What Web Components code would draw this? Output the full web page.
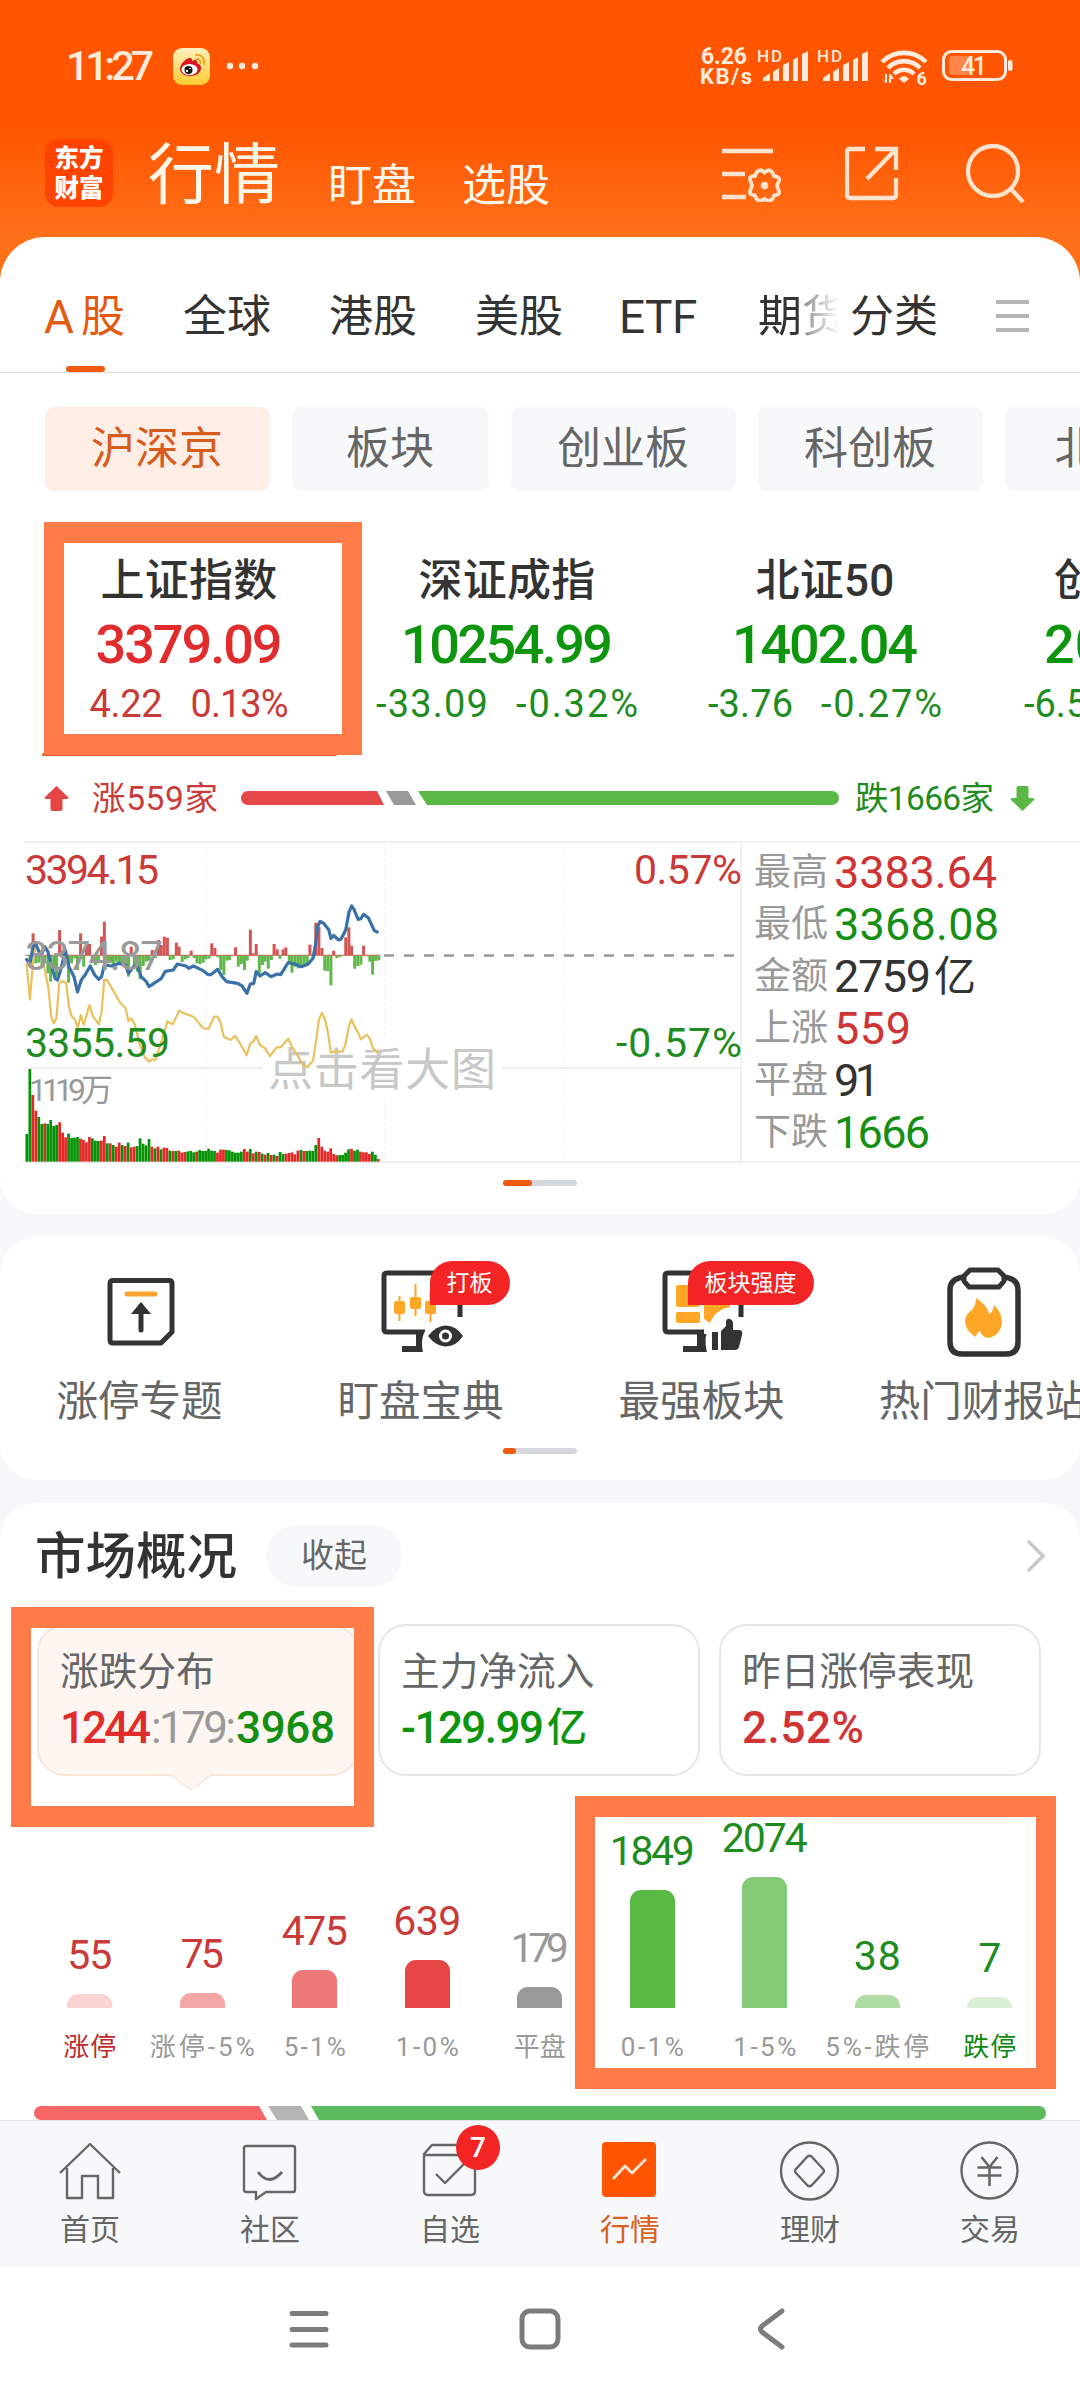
<!DOCTYPE html>
<html lang="zh-CN">
<head>
<meta charset="utf-8">
<title>行情</title>
<style>
    html, body { margin: 0; height: 2400px; overflow: hidden; }
    body {
        width: 1080px;
        font-family: Roboto, "Noto Sans CJK SC", sans-serif;
        color: #333;
        --up: #e02c2c;
        --up-soft: #c93a38;
        --down: #0d960d;
        --down-soft: #1f8c1f;
        --brand: #e35a12;
        --muted: #999;
    }
</style>
</head>
<body>
<market-app></market-app>

<script>
(function() {
    /**
     * Register a custom element from its styles and markup.
     */
    const define = function (name, css, html, setup) {
        const template = document.createElement('template');
        template.innerHTML = `<style>:host { display: block; box-sizing: border-box; } ${css}</style>${html}`;

        customElements.define(name, class extends HTMLElement {
            constructor() {
                super();

                this.attachShadow({mode: 'open'});
                this.shadowRoot.appendChild(template.content.cloneNode(true));
            }

            connectedCallback() {
                if (setup) {
                    setup(this, this.shadowRoot);
                }
            }
        });
    };


    /*
     *     Text tracked to an exact width
     * --------------------------------------
     */
    define('fit-text', `
        :host { display: inline-block; white-space: nowrap; }
        span { display: inline-block; }
    `, `<span><slot></slot></span>`, (el, root) => {
        const span = root.querySelector('span');
        const length = el.textContent.length;

        el.style.fontSize = el.getAttribute('size') + 'px';

        const natural = span.getBoundingClientRect().width;
        const target = Number(el.getAttribute('width'));

        if (target && length > 1) {
            const spacing = (target - natural) / (length - 1);
            span.style.letterSpacing = spacing + 'px';
            span.style.marginRight = -spacing + 'px';
        }
    });


    /*
     *     Status bar
     * ------------------
     */
    define('status-bar', `
        :host { height: 132px; display: flex; align-items: center; padding: 0 64px 0 66px; color: #ffeadb; }
        .time { font-weight: 500; }
        .weibo { margin-left: 19px; }
        .dots { margin-left: 16px; }
        .right { margin-left: auto; }
        svg { display: block; }
    `, `
        <fit-text class="time" size="41" width="88">11:27</fit-text>
        <svg class="weibo" width="37" height="37" viewBox="0 0 37 37">
            <defs><linearGradient id="g" x2="0" y2="1"><stop stop-color="#fff0c0"/><stop offset="1" stop-color="#ffcb2e"/></linearGradient></defs>
            <rect width="37" height="37" rx="9" fill="url(#g)"/>
            <path d="M7 21c0-5 6-11 10-11 2 0 2 1 2 3 3-2 6-1 5 2 3 1 4 3 4 5 0 5-5 8-11 8S7 25 7 21z" fill="#d9151f"/>
            <ellipse cx="16.500" cy="21.500" rx="8" ry="5.500" fill="#fff"/>
            <circle cx="15.500" cy="22" r="4" fill="#111"/>
            <circle cx="14" cy="23" r="1.200" fill="#fff"/><circle cx="17" cy="20.500" r=".8" fill="#fff"/>
            <path d="M23 7c5-1 9 3 8 9M23.500 11c2.500-.4 4.300 1.500 4 4" fill="none" stroke="#eaa61c" stroke-width="1.900" stroke-linecap="round"/>
        </svg>
        <svg class="dots" width="33" height="8" fill="#ffeadb"><circle cx="4" cy="4" r="3.200"/><circle cx="16" cy="4" r="3.200"/><circle cx="29" cy="4" r="3.200"/></svg>
        <svg class="right" width="317" height="44" viewBox="699 44 317 44" fill="#ffeadb" font-family="Roboto">
            <text x="701" y="64" font-size="23" font-weight="700" textLength="46">6.26</text>
            <text x="700" y="84" font-size="22" font-weight="700" textLength="52">KB/s</text>
            <g id="sig">
                <text x="757" y="62" font-size="17" font-weight="500" textLength="25">HD</text>
                <path d="M763 81v-3l7-5v8zM773 80v-8l6-4v13h-5zM783 81v-16l6-3v19zM793 81v-21l5-3v24zM802 81v-27l6-3v30z"/>
            </g>
            <use href="#sig" x="60"/>
            <g fill="none" stroke="#ffeadb" stroke-width="4.600">
                <path d="M882 62a31 31 0 0 1 44 0"/>
                <path d="M888 68a22 22 0 0 1 32 0"/>
                <path d="M894 74a14 14 0 0 1 20 0"/>
            </g>
            <path d="M899 79q5-6 10 0l-5 4z"/>
            <path d="M881 77l4 5v-8h2v9h-2zM889 83v-9h2l3 5h-3v4z"/>
            <text x="916.500" y="84.500" font-size="18" font-weight="700">6</text>
            <rect x="949" y="56" width="20" height="19" rx="3" fill="#ff844a"/>
            <rect x="943.500" y="51.500" width="62" height="28" rx="8" fill="none" stroke="#ffeadb" stroke-width="3"/>
            <rect x="1008" y="60" width="4.500" height="11" rx="2"/>
            <text x="961" y="75" font-size="25" font-weight="500" textLength="26">41</text>
        </svg>
    `);


    /*
     *     App header
     * ------------------
     */
    define('app-header', `
        :host { height: 82px; margin-bottom: 23px; display: flex; align-items: center; padding: 0 54px 0 45px; color: #fff8ea; }
        .logo {
            width: 68px; height: 68px; border-radius: 14px; background: #ff4300; color: #fff;
            font: 900 24.500px/30px "Noto Sans CJK SC", sans-serif; text-align: center; padding: 3px 0 5px; box-sizing: border-box;
        }
        .title { margin: 5px 0 0 35px; font-size: 66px; line-height: 82px; }
        .link { margin: 26px 0 0 48px; font-size: 44px; line-height: 60px; }
        .link + .link { margin-left: 46px; }
        .icons { margin-left: auto; display: flex; align-items: center; }
        svg { display: block; fill: none; stroke: #ffe3cd; stroke-width: 4.300; }
    `, `
        <div class="logo">东方<br>财富</div>
        <div class="title">行情</div>
        <div class="link">盯盘</div>
        <div class="link">选股</div>
        <div class="icons">
            <svg width="60" height="58" viewBox="0 0 60 58">
                <path d="M0 7h51M0 30h23M0 53h24"/>
                <path d="M42.500 28.500Q47 24 50.500 28.500L52 32Q59 33 56.500 38L55 41.500L56.500 46Q59 51 52 51.500L50.500 55Q47 58.500 42.500 55Q38 58.500 34.500 55L33 51.500Q26 51 28.500 46L30 41.500L28.500 37Q26 32 33 32L34.500 28.500Q38 24 42.500 28.500z" stroke-width="3.800"/>
                <circle cx="42.500" cy="41.500" r="3.700" fill="#ffe3cd" stroke="none"/>
            </svg>
            <svg style="margin-left: 63px" width="54" height="56" viewBox="0 0 54 56">
                <path d="M20 4H5Q2 4 2 7V50Q2 53 5 53H48Q51 53 51 50V33M30 4H51V25M51 4L22 34"/>
            </svg>
            <svg style="margin-left: 67px" width="60" height="60" viewBox="0 0 60 60">
                <circle cx="27" cy="28" r="25"/><path d="M45 46L57 59"/>
            </svg>
        </div>
    `);


    /*
     *     White rounded panel
     * ---------------------------
     */
    define('app-card', `
        :host { position: relative; background: #fff; border-radius: 36px; overflow: hidden; }
    `, `<slot></slot>`);


    /*
     *     Market tabs
     * -------------------
     */
    define('market-tabs', `
        :host { height: 136px; border-bottom: 1.500px solid #dedede; display: flex; padding-left: 44px; font-size: 44px; line-height: 161px; white-space: nowrap; }
        div { margin-right: 58px; }
        .active { position: relative; color: var(--brand); width: 81px; display: flex; justify-content: space-between; }
        .active::after { content: ""; position: absolute; left: 22px; top: 129px; width: 39px; height: 6px; border-radius: 3px; background: #f25a0d; }
        .active span:first-child { font-size: 46px; }
        .latin { width: 79px; font-size: 46px; letter-spacing: -.5px; text-indent: -2px; }
        .fade { width: 82px; margin-right: 10px; overflow: hidden; -webkit-mask-image: linear-gradient(90deg, #000 48%, rgba(0, 0, 0, .55) 56%, transparent 98%); }
        svg { margin-top: 63px; }
    `, `
        <div class="active"><span>A</span><span>股</span></div>
        <div>全球</div>
        <div>港股</div>
        <div>美股</div>
        <div class="latin">ETF</div>
        <div class="fade">期货</div>
        <div>分类</div>
        <svg width="33" height="32" viewBox="0 0 33 32" stroke="#b5b5b5" stroke-width="4"><path d="M0 2h33M0 16h33M0 30h33"/></svg>
    `);


    /*
     *     Board filter
     * --------------------
     */
    define('board-filter', `
        :host { margin: 34px 0 0 45px; display: flex; gap: 22px; font-size: 44px; line-height: 85px; color: #666; text-align: center; text-indent: -1px; }
        div { flex: none; width: 225px; height: 84px; border-radius: 9px; background: #f7f8fa; }
        .short { width: 197px; }
        .short:last-child { text-indent: -10px; }
        .active { background: #feeee6; color: #d65b1c; }
    `, `
        <div class="active">沪深京</div>
        <div class="short">板块</div>
        <div>创业板</div>
        <div>科创板</div>
        <div class="short">北证</div>
    `);


    /*
     *     Index quote column
     * --------------------------
     */
    define('index-quote', `
        :host { flex: none; width: 318px; color: var(--down); text-align: center; }
        :host([rise]) { color: var(--up); }
        :host([clipped]) { text-align: left; padding-left: 70px; }
        .name { height: 56px; line-height: 59px; font-size: 44px; font-weight: 500; color: #333; letter-spacing: .3px; }
        .value { height: 72px; line-height: 74px; font-weight: 500; }
        .change { height: 48px; line-height: 49px; display: flex; justify-content: center; gap: 28px; color: var(--down-soft); }
        :host([rise]) .change { color: var(--up-soft); }
        :host([clipped]) .value { margin-left: -10px; }
        :host([clipped]) .change { justify-content: flex-start; margin-left: -30px; }
    `, `
        <div class="name"><slot></slot></div>
        <div class="value"><slot name="value"></slot></div>
        <div class="change"><slot name="change"></slot></div>
    `);


    /*
     *     Rise and fall bar
     * -------------------------
     */
    define('breadth-bar', `
        :host { height: 40px; margin: 50px 44px 0; display: flex; align-items: center; line-height: 40px; }
        .rise { color: var(--up-soft); margin: 1px 23px 0 23px; }
        .fall { color: var(--down-soft); margin: 1px 16px 0 16px; }
        svg { display: block; flex: none; }
    `, `
        <svg width="25" height="25" viewBox="0 0 24 25"><path d="M12 0L24 11.500Q24 13 22 13H18V23Q18 25 16 25H8Q6 25 6 23V13H2Q0 13 0 11.500z" fill="#e64545"/></svg>
        <fit-text class="rise" size="33.500" width="126">涨559家</fit-text>
        <svg width="598" height="14" viewBox="0 0 598 14">
            <path d="M7 0H136L143 14H7A7 7 0 0 1 7 0z" fill="#e64848"/>
            <path d="M145 0H167L175 14H153z" fill="#999"/>
            <path d="M177 0H591A7 7 0 0 1 591 14H186z" fill="#5ab946"/>
        </svg>
        <fit-text class="fall" size="33.500" width="139">跌1666家</fit-text>
        <svg width="25" height="25" viewBox="0 0 24 25"><path d="M12 25L0 13.500Q0 12 2 12H6V2Q6 0 8 0H16Q18 0 18 2V12H22Q24 12 24 13.500z" fill="#5ab946"/></svg>
    `);


    /*
     *     Intraday chart
     * ----------------------
     */
    const MIDLINE = 376;
    const FLOOR = 995;
    const STEP = 8.65;

    // tops of the volume bars, one per two minutes
    const volumes = [912, 717, 795, 842, 861, 882, 880, 882, 870, 888, 885, 877, 908, 922, 911, 924, 923, 921, 926, 930,
        937, 921, 925, 932, 933, 932, 918, 940, 940, 945, 950, 938, 945, 948, 938, 952, 950, 948, 925, 941,
        946, 927, 950, 955, 950, 958, 953, 954, 962, 963, 963, 962, 968, 966, 964, 963, 967, 965, 960, 963,
        963, 956, 962, 963, 968, 959, 959, 960, 961, 965, 968, 968, 965, 957, 965, 957, 970, 965, 966, 971,
        974, 969, 975, 974, 978, 966, 972, 971, 969, 967, 973, 962, 960, 963, 963, 962, 963, 945, 924, 950,
        962, 965, 955, 972, 976, 975, 975, 968, 958, 957, 963, 959, 965, 967, 967, 972, 965, 974, 987];
    const colors = 'GGRRGGRGGGGRRRGGGGRRRRGGGRRGRGRRGRGRRGGGGGRGRGRRGRGRRRGGGRGGGGGGRRRGGGGGGRRGRGRGRGRGRGGRRRRRGRGGGGRRRRRRRGGGGRGGRRRRGGRGRGGGGR';

    const rising = [96, 310, 173, 300, 182, 360, 234, 310, 251, 342, 260, 342, 295, 320, 303, 275, 381, 350, 442, 360, 460, 330, 468, 345,
        477, 320, 486, 323, 512, 338, 520, 350, 555, 362, 615, 340, 624, 354, 684, 352, 727, 299, 735, 370, 744, 342, 796, 342,
        805, 358, 822, 358, 830, 352, 900, 344, 917, 278, 926, 290, 935, 354, 969, 362, 1004, 322, 1013, 292, 1021, 347, 1056, 347];
    const falling = [87, 392, 104, 400, 113, 398, 122, 405, 130, 400, 139, 430, 147, 455, 156, 420, 164, 440, 190, 385, 199, 458, 208, 400,
        217, 385, 225, 420, 243, 410, 268, 395, 277, 405, 286, 400, 312, 400, 321, 398, 329, 404, 338, 395, 347, 402, 356, 396,
        364, 410, 373, 440, 390, 410, 399, 425, 407, 448, 416, 408, 425, 395, 433, 392, 451, 384, 494, 390, 503, 388, 529, 396,
        538, 388, 546, 384, 564, 384, 572, 400, 581, 402, 590, 398, 598, 388, 607, 386, 633, 382, 641, 420, 650, 435, 659, 392,
        667, 390, 692, 410, 701, 402, 710, 420, 718, 392, 753, 430, 762, 405, 770, 395, 779, 416, 788, 390, 813, 386, 840, 398,
        848, 428, 857, 410, 866, 415, 874, 410, 883, 408, 892, 400, 909, 386, 943, 422, 952, 424, 961, 466, 978, 384, 987, 381,
        1030, 416, 1039, 408, 1048, 404, 1065, 379, 1074, 395, 1082, 434, 1091, 393, 1100, 391];

    const volumeBars = volumes.map((top, i) =>
        `<rect x="${(74 + i * STEP).toFixed(1)}" y="${top}" width="8" height="${FLOOR - top}" fill="${colors[i] === 'R' ? '#e42828' : '#059205'}"/>`
    ).join('');

    const spikes = (pairs, fill) => {
        let out = '';
        for (let i = 0; i < pairs.length; i += 2) {
            const y = pairs[i + 1];
            out += `<rect x="${pairs[i] - 4.3}" y="${Math.min(y, MIDLINE)}" width="8.700" height="${Math.abs(y - MIDLINE)}" fill="${fill}"/>`;
        }
        return out;
    };

    define('intraday-chart', `
        :host { flex: none; width: 742px; height: 322px; }
        svg { display: block; font-family: Roboto, "Noto Sans CJK SC", sans-serif; }
        polyline { fill: none; stroke-linejoin: round; vector-effect: non-scaling-stroke; }
    `, `
        <svg width="742" height="322" viewBox="0 0 742 322">
            <g fill="none" stroke="#f0f0f1" stroke-width="2">
                <path d="M24 1H742M24 227H742M24 321H742M741 0V322"/>
                <path d="M205.500 2V320M384.500 2V320M563.500 2V320" stroke-width="1" stroke="#e6e6e6" stroke-dasharray="1 2"/>
            </g>
            <rect x="263" y="196" width="238" height="62" fill="#fff"/>
            <path d="M384 114.500H736" stroke="#999" stroke-width="2.500" stroke-dasharray="10 10"/>
            <text x="268" y="245" font-size="45" fill="#c8c8c8" textLength="228">点击看大图</text>
            <g transform="translate(0 -11) scale(.34435 .33333)">
                ${spikes(rising, '#d55353')}
                ${spikes(falling, '#60b84b')}
                <path d="M74 376H1103" stroke="#b9684a" stroke-width="3"/>
                ${volumeBars}
                <polyline stroke="#eac05c" stroke-width="2.200" points="77,400 87,508 96,395 104,345 120,370 130,420 140,470 149,560 156,580 164,565 172,460 180,453 192,458 200,530 208,558 217,568 226,592 235,555 243,585 260,525 270,560 287,583 295,545 303,450 310,449 325,475 350,520 365,535 373,573 381,565 392,585 405,640 420,680 433,695 442,688 451,690 470,630 486,575 502,582 520,542 530,548 562,560 590,595 606,596 622,560 632,560 640,575 650,620 670,630 683,618 697,640 716,676 727,640 735,636 744,618 755,645 770,655 784,678 803,652 815,652 837,626 850,655 862,672 880,705 892,712 909,692 917,640 926,570 935,548 944,570 952,605 961,668 970,665 995,665 1004,640 1013,590 1021,568 1030,590 1040,608 1048,628 1065,614 1074,626 1083,655 1099,670"/>
                <polyline stroke="#3a71a8" stroke-width="3.200" points="75,385 87,402 96,350 104,342 113,365 122,370 130,350 139,365 150,410 160,445 167,450 176,420 190,362 200,410 215,440 225,486 236,450 247,435 262,408 275,435 287,448 295,440 303,405 325,408 345,400 365,405 373,430 388,410 397,405 410,440 425,455 433,470 450,458 468,446 480,424 503,420 515,402 540,408 548,415 562,408 590,422 605,434 612,434 632,418 645,440 658,455 690,460 703,468 717,490 727,462 737,460 744,425 755,438 770,428 787,440 805,432 815,434 837,398 855,402 875,410 895,402 909,385 917,340 922,290 930,274 940,280 955,300 961,325 969,316 983,330 990,328 1004,300 1013,248 1021,228 1028,238 1040,268 1048,266 1056,253 1070,264 1087,302 1099,308"/>
            </g>
            <g font-size="41">
                <text x="25" y="43" fill="#c93a38" textLength="134">3394.15</text>
                <text x="25" y="129" fill="#999" textLength="138">3374.87</text>
                <text x="25" y="216" fill="#1f8c1f" textLength="145">3355.59</text>
                <text x="634" y="43" fill="#c93a38" textLength="108">0.57%</text>
                <text x="616" y="216" fill="#1f8c1f" textLength="126">-0.57%</text>
                <text x="29" y="260" font-size="32" fill="#999" textLength="84">1119万</text>
            </g>
        </svg>
    `);


    /*
     *     Intraday figures
     * ------------------------
     */
    define('quote-stats', `
        :host { flex: 1; height: 322px; border: solid #f3f3f4; border-width: 2px 0; padding: 4px 0 0 12px; }
        div { display: flex; align-items: center; height: 52px; line-height: 52px; }
        b { font-weight: 400; font-size: 37px; color: var(--muted); width: 80px; white-space: nowrap; }
        .up { color: #cf3434; }
        .down { color: #148f14; }
    `, `
        <div><b>最高</b><fit-text class="up" size="45" width="163">3383.64</fit-text></div>
        <div><b>最低</b><fit-text class="down" size="45" width="165">3368.08</fit-text></div>
        <div><b>金额</b><fit-text size="45" width="97">2759</fit-text><fit-text size="42" style="margin-left: 3px">亿</fit-text></div>
        <div><b>上涨</b><fit-text class="up" size="45" width="77">559</fit-text></div>
        <div><b>平盘</b><fit-text size="45" width="46">91</fit-text></div>
        <div><b>下跌</b><fit-text class="down" size="45" width="96">1666</fit-text></div>
    `);


    /*
     *     Pager under a carousel
     * ------------------------------
     */
    define('page-dots', `
        :host { width: 74px; height: 6px; margin: 17px auto 0; border-radius: 3px; background: #d4d7db; }
        div { width: var(--on, 29px); height: 6px; border-radius: 3px; background: #ee5a10; }
    `, `<div></div>`);


    /*
     *     Shortcut tile
     * ---------------------
     */
    define('tool-tile', `
        :host { flex: none; width: 281px; display: flex; flex-direction: column; align-items: center; color: #666; }
        .icon { height: 126px; position: relative; display: flex; align-items: flex-end; }
        .badge { position: absolute; left: var(--badge-x, 53px); top: 24px; }
        .label { font-size: 41.500px; line-height: 78px; white-space: nowrap; margin-left: -2px; }
    `, `
        <div class="icon"><slot name="icon"></slot><div class="badge"><slot name="badge"></slot></div></div>
        <div class="label"><slot></slot></div>
    `);

    define('red-badge', `
        :host { height: 44px; padding: 0 17px; border-radius: 22px 22px 22px 0; background: #f22424; color: #fff; font-size: 23px; line-height: 45px; white-space: nowrap; }
    `, `<slot></slot>`);


    /*
     *     Summary card
     * --------------------
     */
    define('summary-card', `
        :host { height: 152px; border: 2px solid #e6e6e7; border-radius: 28px; padding: 20px 0 0 21px; position: relative; white-space: nowrap; }
        :host([active]) { background: #fff5f1; border-color: #fae5da; }
        .label { font-size: 38.700px; line-height: 52px; color: #666; }
        .value { display: flex; align-items: center; height: 60px; line-height: 60px; font-weight: 500; }
        svg { display: none; position: absolute; left: 132px; top: 147px; }
        :host([active]) svg { display: block; }
    `, `
        <div class="label"><slot></slot></div>
        <div class="value"><slot name="value"></slot></div>
        <svg width="40" height="17" viewBox="0 0 40 17"><path d="M0 2.500L17 15Q20 17 23 15L40 2.500V0H0z" fill="#fff5f1"/><path d="M0 2L17 15Q20 17 23 15L40 2" fill="none" stroke="#fae5da" stroke-width="1.500"/></svg>
    `);


    /*
     *     Distribution chart
     * --------------------------
     */
    const buckets = [
        ['55', 45, 14, '#fad3d3', '涨停', 53, '#c93a38', '#c02a2a'],
        ['75', 43, 15, '#f4a6a6', '涨停-5%', 105, '#c93a38'],
        ['475', 66, 38, '#ee7777', '5-1%', 62, '#c93a38'],
        ['639', 68, 48, '#e64646', '1-0%', 63, '#c93a38'],
        ['179', 58, 21, '#999', '平盘', 52, '#999'],
        ['1849', 85, 118, '#5ab943', '0-1%', 63, '#1f8c1f'],
        ['2074', 86, 131, '#82ca75', '1-5%', 63, '#1f8c1f'],
        ['38', 47, 13, '#aedca3', '5%-跌停', 104, '#1f8c1f'],
        ['7', 0, 11, '#d8efd4', '跌停', 53, '#1f8c1f', '#0d8a0d']
    ];

    define('distribution-chart', `
        :host { display: flex; height: 287px; margin: 0 34px 0 33.500px; }
        .bucket { flex: 1; display: flex; flex-direction: column; justify-content: flex-end; align-items: center; }
        .bar { width: 45px; margin-top: 13px; }
        .value { line-height: 52px; }
        .label { height: 55px; padding-top: 12px; line-height: 55px; box-sizing: border-box; }
    `, buckets.map(([count, width, height, fill, label, labelWidth, color, labelColor]) => `
        <div class="bucket">
            <fit-text class="value" size="41" width="${width}" style="color: ${color}">${count}</fit-text>
            <div class="bar" style="height: ${height}px; background: ${fill}; border-radius: ${Math.min(height, 11)}px ${Math.min(height, 11)}px 0 0"></div>
            <fit-text class="label" size="26" width="${labelWidth}" style="color: ${labelColor || '#999'}">${label}</fit-text>
        </div>`).join(''));

    define('ratio-bar', `
        :host { height: 14px; margin: 43px 34px 0; }
        svg { display: block; }
    `, `
        <svg width="1012" height="14" viewBox="0 0 1012 14">
            <path d="M7 0H225L233 14H7A7 7 0 0 1 7 0z" fill="#f76666"/>
            <path d="M234 0H267L275 14H243z" fill="#b4b4b4"/>
            <path d="M277 0H1005A7 7 0 0 1 1005 14H285z" fill="#5cbb5c"/>
        </svg>
    `);


    /*
     *     Highlight frame drawn over the page
     * -------------------------------------------
     */
    define('mark-frame', `
        :host { position: absolute; border: solid #ff7b47; border-width: 21px 20px; z-index: 2; }
    `, ``);


    /*
     *     Bottom tab bar
     * ----------------------
     */
    define('tab-bar', `
        :host { height: 147px; flex: none; border-top: 1.500px solid #e3e3e5; background: #f7f8fa; display: grid; grid-template-columns: repeat(6, 1fr); color: #666; position: relative; }
        .tab { display: flex; flex-direction: column; align-items: center; padding-top: 20px; position: relative; }
        .tab span { font-size: 30px; line-height: 44px; margin-top: 7px; }
        .active { color: #d9601d; }
        .count { position: absolute; left: 96px; top: 4px; width: 44px; height: 45px; border-radius: 50%; background: #f22424; color: #fff; font-size: 28px; line-height: 45px; text-align: center; font-weight: 500; }
        svg { display: block; fill: none; stroke: #666; stroke-width: 2.400; stroke-linejoin: round; }
    `, `
        <div class="tab">
            <svg width="62" height="60" viewBox="0 0 62 60"><path d="M1 32L31 3L61 32M8 27V57H23V35H39V57H54V27"/></svg>
            <span>首页</span>
        </div>
        <div class="tab">
            <svg width="62" height="60" viewBox="0 0 62 60"><path d="M7 5H54Q56 5 56 7V49Q56 51 54 51H27L17 58V51H7Q5 51 5 49V7Q5 5 7 5z"/><path d="M19 31Q30 46 43 31" stroke-width="2.800"/></svg>
            <span>社区</span>
        </div>
        <div class="tab">
            <svg width="62" height="60" viewBox="0 0 62 60"><path d="M5 13L13 4H49L56 13V50Q56 54 52 54H9Q5 54 5 50zM5 14H56M17 33L26 42L46 22"/></svg>
            <span>自选</span>
            <div class="count">7</div>
        </div>
        <div class="tab active">
            <svg width="62" height="60" viewBox="0 0 62 60"><rect x="3" y="1" width="54" height="55" rx="4" fill="#ff5500" stroke="none"/><path d="M14 38L26 25L33 32L47 18" stroke="#ffe6d5" stroke-width="2.800"/></svg>
            <span>行情</span>
        </div>
        <div class="tab">
            <svg width="62" height="60" viewBox="0 0 62 60"><circle cx="30.500" cy="30" r="28.500"/><path d="M28.500 15.500Q30.500 14 32.500 15.500L44.500 28.500Q45.500 30 44.500 31.500L32.500 44.500Q30.500 46 28.500 44.500L16.500 31.500Q15.500 30 16.500 28.500z"/></svg>
            <span>理财</span>
        </div>
        <div class="tab">
            <svg width="62" height="60" viewBox="0 0 62 60"><circle cx="30.500" cy="29.500" r="28"/><path d="M22.500 16L30.500 26L38.500 16M18.500 26.500H42.500M18.500 34.500H42.500M30.500 26V45" stroke-width="2.600"/></svg>
            <span>交易</span>
        </div>
    `);


    /*
     *     System navigation
     * -------------------------
     */
    define('system-nav', `
        :host { height: 133px; flex: none; background: #fff; display: flex; align-items: flex-start; justify-content: center; gap: 190px; padding: 41px 0 0 1px; box-sizing: border-box; }
        svg { display: block; fill: none; stroke: #7c7c7c; stroke-width: 5; stroke-linecap: round; stroke-linejoin: round; }
    `, `
        <svg width="40" height="42" viewBox="0 0 40 42"><path d="M3 5.500H37M3 21.500H37M3 37H37"/></svg>
        <svg width="42" height="42" viewBox="0 0 42 42"><rect x="3" y="3" width="36" height="36" rx="8"/></svg>
        <svg width="42" height="42" viewBox="0 0 42 42"><path d="M31 3L11 18Q8 21 11 24L31 39"/></svg>
    `);


    /*
     *     Page
     * ------------
     */
    define('market-app', `
        :host { display: flex; flex-direction: column; height: 2400px; width: 1080px; overflow: hidden; background: #f6f8fa; }
        .scroll { flex: none; height: 2120px; overflow: hidden; position: relative; background: linear-gradient(#ff5500 124px, #ff7019 237px, #ff7019 300px, #f6f8fa 300px); }
        .main { height: 977px; border-radius: 45px 45px 36px 36px; }
        .quotes { display: flex; margin: 61px 0 0 30px; }
        .chart { display: flex; margin-top: 23px; }
        .tools { height: 243px; margin-top: 23px; }
        .tiles { display: flex; }
        .tiles svg { display: block; fill: none; stroke: #333; stroke-width: 5; stroke-linejoin: round; overflow: visible; }
        .overview { height: 700px; margin-top: 23px; }
        .head { height: 62px; padding: 22px 34px 0 35px; display: flex; align-items: center; }
        .head h2 { margin: 2px 0 0; font-size: 50.500px; line-height: 62px; font-weight: 500; width: 202px; white-space: nowrap; }
        .head button { margin-left: 29px; width: 136px; height: 62px; border: 0; border-radius: 31px; background: #f6f8fa; color: #666; font: inherit; font-size: 33px; line-height: 62px; padding: 0; }
        .head svg { margin-left: auto; }
        .summary { display: grid; grid-template-columns: repeat(3, 322px); gap: 19px; margin: 37px 0 0 37px; }
        .flat { color: #999; font-weight: 400; }
        .underline { position: absolute; left: 42px; top: 753px; width: 295px; height: 3px; border-radius: 2px; background: #df5a1e; z-index: 1; }
    `, `
        <div class="scroll">
            <status-bar></status-bar>
            <app-header></app-header>

            <app-card class="main">
                <market-tabs></market-tabs>
                <board-filter></board-filter>
                <div class="quotes">
                    <index-quote rise>上证指数<fit-text slot="value" size="54" width="187">3379.09</fit-text><fit-text slot="change" size="38" width="73">4.22</fit-text><fit-text slot="change" size="38" width="98">0.13%</fit-text></index-quote>
                    <index-quote>深证成指<fit-text slot="value" size="54" width="212">10254.99</fit-text><fit-text slot="change" size="38" width="112">-33.09</fit-text><fit-text slot="change" size="38" width="122">-0.32%</fit-text></index-quote>
                    <index-quote>北证50<fit-text slot="value" size="54" width="186">1402.04</fit-text><fit-text slot="change" size="38" width="85">-3.76</fit-text><fit-text slot="change" size="38" width="121">-0.27%</fit-text></index-quote>
                    <index-quote clipped>创业<fit-text slot="value" size="54">20</fit-text><fit-text slot="change" size="38">-6.5</fit-text></index-quote>
                </div>
                <breadth-bar></breadth-bar>
                <div class="chart">
                    <intraday-chart></intraday-chart>
                    <quote-stats></quote-stats>
                </div>
                <page-dots></page-dots>
            </app-card>

            <app-card class="tools">
                <div class="tiles">
                    <tool-tile>
                        <svg slot="icon" width="68" height="84" viewBox="0 0 68 84" style="margin-bottom: 1px">
                            <path d="M6 2.500H62Q65 2.500 65 5.500V54L54 65H6Q3 65 3 62V5.500Q3 2.500 6 2.500z"/>
                            <path d="M20 16H48" stroke="#f7a32d" stroke-width="5" stroke-linecap="round"/>
                            <path d="M34 52V28" stroke-linecap="round"/><path d="M24 36L34 24L44 36z" fill="#333" stroke="none"/>
                        </svg>
                        涨停专题
                    </tool-tile>
                    <tool-tile style="--badge-x: 49px">
                        <svg slot="icon" width="82" height="92" viewBox="0 0 82 92" style="margin-bottom: 10px">
                            <path d="M44 71H6Q3 71 3 68V15Q3 12 6 12H76Q79 12 79 15V56"/><path d="M38 73V87M21 88H45M42 73V86" stroke-width="6"/>
                            <g fill="#ffa626" stroke="none"><rect x="13" y="40" width="11" height="13" rx="2"/><rect x="17.500" y="35" width="2" height="25"/><rect x="29" y="36" width="11" height="12" rx="2"/><rect x="33.500" y="23" width="2" height="32"/><rect x="44" y="40" width="11" height="13" rx="2"/><rect x="48.500" y="30" width="2" height="31"/></g>
                            <path d="M42 92Q38 72 50 64T66 58Q80 60 82 66V92z" fill="#fff" stroke="none"/>
                            <path d="M47 75Q55 64.500 65 64.500T82 75Q75 85.500 65 85.500T47 75z" fill="#333" stroke="none"/>
                            <circle cx="64.500" cy="75" r="5" fill="#333" stroke="#fff" stroke-width="3"/>
                        </svg>
                        <red-badge slot="badge">打板</red-badge>
                        盯盘宝典
                    </tool-tile>
                    <tool-tile style="--badge-x: 26px">
                        <svg slot="icon" width="82" height="92" viewBox="0 0 82 92" style="margin-bottom: 10px">
                            <path d="M42 71H6Q3 71 3 68V15Q3 12 6 12H76Q79 12 79 15V56"/><path d="M38 73V87M21 88H45M42 73V86" stroke-width="6"/>
                            <g fill="#ffa626" stroke="none"><rect x="14" y="24" width="24" height="22" rx="2"/><rect x="14" y="51" width="24" height="11" rx="2"/><path d="M42 24H68V46Q54 48 48 62L42 58z"/></g>
                            <path d="M45 92Q41 76 48 62T68 54Q82 58 82 64V92z" fill="#fff" stroke="none"/>
                            <path d="M50 71H56V89H50zM59 70L64 65V60Q65 57 68 58T71 63V69H78Q81 70 80 74L77 86Q76 89 73 89H59z" fill="#333" stroke="none"/>
                        </svg>
                        <red-badge slot="badge">板块强度</red-badge>
                        最强板块
                    </tool-tile>
                    <tool-tile>
                        <svg slot="icon" width="74" height="96" viewBox="0 0 74 96" style="margin-bottom: 2px">
                            <path d="M18 12Q3 13 3 25V77Q3 89 15 89H59Q71 89 71 77V25Q71 13 56 12" stroke-width="5.500"/>
                            <path d="M23 5H51L57 11V16L52 22H22L17 16V11z" stroke-width="5"/>
                            <path d="M29 33Q41 41 42 49Q46 47 47 40Q55 48 55 58Q53 71 41 73Q35 72 33 66Q30 67 29 72Q18 66 18 55Q19 49 25 45Q29 40 29 33z" fill="#ffa626" stroke="none"/>
                        </svg>
                        热门财报站
                    </tool-tile>
                </div>
                <page-dots style="margin-top: 7px; --on: 13px"></page-dots>
            </app-card>

            <app-card class="overview">
                <div class="head">
                    <h2>市场概况</h2>
                    <button>收起</button>
                    <svg width="20" height="34" viewBox="0 0 20 34" fill="none" stroke="#c8c8c8" stroke-width="3.500"><path d="M2 2L17 17L2 32"/></svg>
                </div>
                <div class="summary">
                    <summary-card active>涨跌分布<fit-text slot="value" size="44" width="91" style="color: var(--up)">1244</fit-text><fit-text slot="value" class="flat" size="44" width="85">:179:</fit-text><fit-text slot="value" size="44" width="99" style="color: #148f14">3968</fit-text></summary-card>
                    <summary-card>主力净流入<fit-text slot="value" size="44" width="143" style="color: var(--down)">-129.99</fit-text><fit-text slot="value" size="40" style="color: var(--down); margin-left: 3px">亿</fit-text></summary-card>
                    <summary-card>昨日涨停表现<fit-text slot="value" size="44" width="122" style="color: #d13434">2.52%</fit-text></summary-card>
                </div>
                <distribution-chart></distribution-chart>
                <ratio-bar></ratio-bar>
            </app-card>

            <div class="underline"></div>
            <mark-frame style="left: 44px; top: 522px; width: 318px; height: 233px"></mark-frame>
            <mark-frame style="left: 11px; top: 1607px; width: 363px; height: 220px"></mark-frame>
            <mark-frame style="left: 575px; top: 1796px; width: 481px; height: 293px"></mark-frame>
        </div>

        <tab-bar></tab-bar>
        <system-nav></system-nav>
    `);
})();
</script>
</body>
</html>
